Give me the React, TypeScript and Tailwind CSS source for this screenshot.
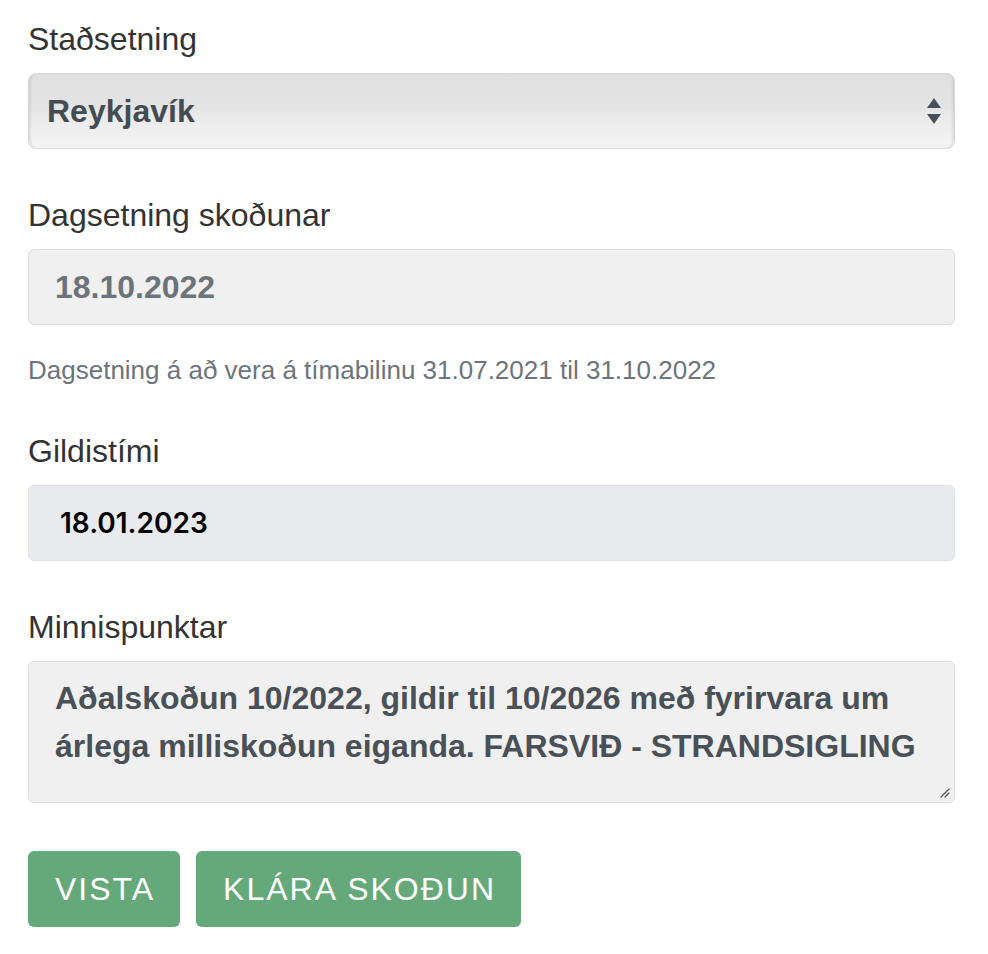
const label = "block text-[32px] leading-[48px] text-[#333333] mb-[10px]";

function ResizeGrip() {
  return (
    <svg className="absolute right-[4px] bottom-[4px]" width="12" height="12" viewBox="0 0 12 12">
      <path d="M11 3 L3 11 M11 7 L7 11" stroke="#555" strokeWidth="1.2" strokeLinecap="round" />
    </svg>
  );
}

export default function App() {
  return (
    <div className="min-h-screen bg-white font-['Liberation_Sans',Arial,sans-serif]">
      <form className="w-[927px] ml-[28px] pt-[15px]">
        <div className="mb-[42px]">
          <label className={label}>Staðsetning</label>
          <div className="relative h-[76px] rounded-[8px] border border-[#d9d9d9] bg-[linear-gradient(#e0e0e0,#e4e4e4_48%,#e9e9e9_52%,#f4f4f4)] shadow-[inset_3px_0_3px_-2px_rgba(0,0,0,0.12),inset_-3px_0_3px_-2px_rgba(0,0,0,0.12)] flex items-center pl-[18px]">
            <span className="text-[32px] font-bold text-[#454b52]">Reykjavík</span>
            <svg className="absolute right-[13px] top-[24px]" width="14" height="27" viewBox="0 0 14 27">
              <path d="M7 0 L14 10 L0 10 Z" fill="#495057" />
              <path d="M0 16 L14 16 L7 26 Z" fill="#495057" />
            </svg>
          </div>
        </div>

        <div className="mb-[26px]">
          <label className={label}>Dagsetning skoðunar</label>
          <div className="h-[76px] rounded-[6px] border border-[#dddddd] bg-[#f0f0f0] flex items-center pl-[26px]">
            <span className="text-[32px] font-bold text-[#6c737a]">18.10.2022</span>
          </div>
        </div>
        <p className="text-[26px] leading-[39px] text-[#6c757d] mb-[37px]">
          Dagsetning á að vera á tímabilinu 31.07.2021 til 31.10.2022
        </p>

        <div className="mb-[42px]">
          <label className={label}>Gildistími</label>
          <div className="h-[76px] rounded-[6px] border border-[#e2e3e6] bg-[#e9eaed] flex items-center pl-[31px]">
            <span className="font-['Inter',sans-serif] text-[28px] font-semibold text-black">18.01.2023</span>
          </div>
        </div>

        <div className="mb-[48px]">
          <label className={label}>Minnispunktar</label>
          <div className="relative h-[142px] rounded-[6px] border border-[#dddddd] bg-[#f0f0f0] pl-[26px] pt-[12px]">
            <p className="text-[32px] leading-[48px] font-bold text-[#495057]">
              Aðalskoðun 10/2022, gildir til 10/2026 með fyrirvara um
              <br />
              árlega milliskoðun eiganda. FARSVIÐ - STRANDSIGLING
            </p>
            <ResizeGrip />
          </div>
        </div>

        <div className="flex gap-[16px]">
          <button type="button" className="h-[76px] pl-[27px] pr-[25px] rounded-[6px] bg-[#65a97a] text-white text-[32px] tracking-[2px]">
            VISTA
          </button>
          <button type="button" className="h-[76px] pl-[27px] pr-[25px] rounded-[6px] bg-[#65a97a] text-white text-[32px] tracking-[2px]">
            KLÁRA SKOÐUN
          </button>
        </div>
      </form>
    </div>
  );
}
